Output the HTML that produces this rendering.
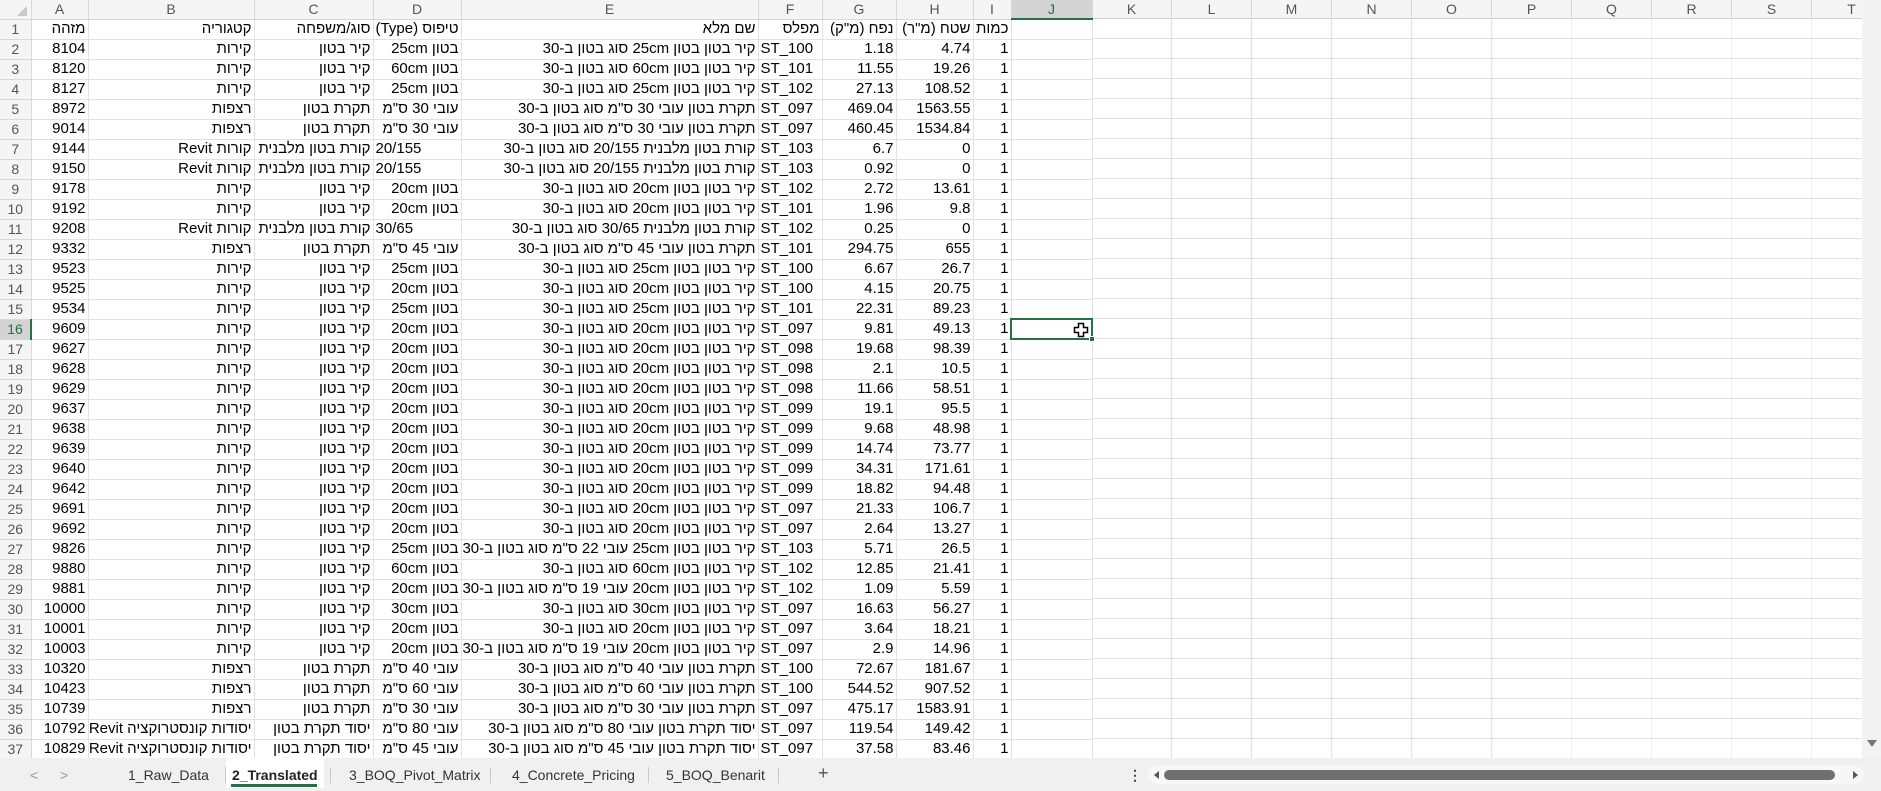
<!DOCTYPE html>
<html><head><meta charset="utf-8">
<style>
*{box-sizing:border-box;margin:0;padding:0}
body{width:1881px;height:791px;overflow:hidden;background:#fff;font-family:"Liberation Sans Narrow","Liberation Sans",sans-serif;font-size:15px;color:#000;position:relative}
#grid{position:absolute;left:0;top:0;width:1862px;height:758px;overflow:hidden;
background-image:repeating-linear-gradient(to right,transparent 0,transparent 79px,#e1e1e1 79px,#e1e1e1 80px);
background-position:1092px 0;}
#hlines{position:absolute;left:1092px;top:19px;width:770px;height:740px;background-image:repeating-linear-gradient(to bottom,transparent 0,transparent 19px,#e1e1e1 19px,#e1e1e1 20px)}
#hdrbar{position:absolute;left:0;top:0;width:1862px;height:19px;background:#f5f5f5;border-bottom:1px solid #d0d0d0}
table{position:absolute;left:0;top:0;border-collapse:collapse;table-layout:fixed;width:1092px;background:#fff}
td{height:20px;border:1px solid #e1e1e1;white-space:nowrap;overflow:hidden;padding:0 2px;text-align:right;line-height:18px}
tr.h td{height:19px;background:#f5f5f5;color:#555;text-align:center;font-family:"Liberation Sans",sans-serif;font-size:14px;border-color:#d8d8d8;border-top:none}
td:first-child{background:#f5f5f5;color:#555;text-align:center;font-family:"Liberation Sans",sans-serif;font-size:14px;border-color:#d8d8d8;border-left:none}
td.l{text-align:left}
.rtl{direction:rtl;text-align:right}
.hl{background:#d3d3d3!important;color:#217346!important;border-bottom:2px solid #217346!important}
.hr{background:#d3d3d3!important;color:#217346!important;border-right:2px solid #217346!important}
.colh{position:absolute;top:0;height:19px;width:80px;text-align:center;color:#555;font-family:"Liberation Sans",sans-serif;font-size:14px;line-height:19px;border-right:1px solid #d8d8d8}
#sel{position:absolute;left:1010px;top:318px;width:83px;height:22px;border:2px solid #217346}
#sel i{position:absolute;right:-4px;bottom:-4px;width:6px;height:6px;background:#217346;border:1px solid #fff}
#vs{position:absolute;left:1862px;top:0;width:19px;height:758px;background:#f3f3f3}
#tabs{position:absolute;left:0;top:758px;width:1881px;height:33px;background:#f0f0f0;font-family:"Liberation Sans Narrow","Liberation Sans",sans-serif;font-size:14px;color:#333}
.t{position:absolute;top:7px;line-height:20px}
.sep{position:absolute;top:9px;width:1px;height:16px;background:#c8c8c8}
</style></head><body>
<div id="grid"><div id="hlines"></div><div id="hdrbar"></div>
<div class="colh" style="left:1092px">K</div><div class="colh" style="left:1172px">L</div><div class="colh" style="left:1252px">M</div><div class="colh" style="left:1332px">N</div><div class="colh" style="left:1412px">O</div><div class="colh" style="left:1492px">P</div><div class="colh" style="left:1572px">Q</div><div class="colh" style="left:1652px">R</div><div class="colh" style="left:1732px">S</div><div class="colh" style="left:1812px">T</div>
<table>
<colgroup><col style="width:31px"><col style="width:57px"><col style="width:166px"><col style="width:119px"><col style="width:88px"><col style="width:297px"><col style="width:64px"><col style="width:74px"><col style="width:77px"><col style="width:38px"><col style="width:81px"></colgroup>
<tr class="h"><td style="background:#f5f5f5;position:relative"><span style="position:absolute;right:4px;bottom:3px;width:0;height:0;border-left:10px solid transparent;border-bottom:10px solid #c8c8c8"></span></td><td>A</td><td>B</td><td>C</td><td>D</td><td>E</td><td>F</td><td>G</td><td>H</td><td>I</td><td class="hl">J</td></tr>
<tr><td>1</td><td class="rtl">מזהה</td><td class="rtl">קטגוריה</td><td class="rtl">סוג/משפחה</td><td class="rtl">טיפוס (Type)</td><td class="rtl">שם מלא</td><td class="rtl">מפלס</td><td class="rtl">נפח (מ"ק)</td><td class="rtl">שטח (מ"ר)</td><td class="rtl">כמות</td><td></td></tr>
<tr><td>2</td><td>8104</td><td class="rtl">קירות</td><td class="rtl">קיר בטון</td><td class="rtl">בטון 25cm</td><td class="rtl">קיר בטון בטון 25cm סוג בטון ב-30</td><td class="l">ST_100</td><td>1.18</td><td>4.74</td><td>1</td><td></td></tr>
<tr><td>3</td><td>8120</td><td class="rtl">קירות</td><td class="rtl">קיר בטון</td><td class="rtl">בטון 60cm</td><td class="rtl">קיר בטון בטון 60cm סוג בטון ב-30</td><td class="l">ST_101</td><td>11.55</td><td>19.26</td><td>1</td><td></td></tr>
<tr><td>4</td><td>8127</td><td class="rtl">קירות</td><td class="rtl">קיר בטון</td><td class="rtl">בטון 25cm</td><td class="rtl">קיר בטון בטון 25cm סוג בטון ב-30</td><td class="l">ST_102</td><td>27.13</td><td>108.52</td><td>1</td><td></td></tr>
<tr><td>5</td><td>8972</td><td class="rtl">רצפות</td><td class="rtl">תקרת בטון</td><td class="rtl">עובי 30 ס"מ</td><td class="rtl">תקרת בטון עובי 30 ס"מ סוג בטון ב-30</td><td class="l">ST_097</td><td>469.04</td><td>1563.55</td><td>1</td><td></td></tr>
<tr><td>6</td><td>9014</td><td class="rtl">רצפות</td><td class="rtl">תקרת בטון</td><td class="rtl">עובי 30 ס"מ</td><td class="rtl">תקרת בטון עובי 30 ס"מ סוג בטון ב-30</td><td class="l">ST_097</td><td>460.45</td><td>1534.84</td><td>1</td><td></td></tr>
<tr><td>7</td><td>9144</td><td class="rtl">קורות Revit</td><td class="rtl">קורת בטון מלבנית</td><td class="l">20/155</td><td class="rtl">קורת בטון מלבנית 20/155 סוג בטון ב-30</td><td class="l">ST_103</td><td>6.7</td><td>0</td><td>1</td><td></td></tr>
<tr><td>8</td><td>9150</td><td class="rtl">קורות Revit</td><td class="rtl">קורת בטון מלבנית</td><td class="l">20/155</td><td class="rtl">קורת בטון מלבנית 20/155 סוג בטון ב-30</td><td class="l">ST_103</td><td>0.92</td><td>0</td><td>1</td><td></td></tr>
<tr><td>9</td><td>9178</td><td class="rtl">קירות</td><td class="rtl">קיר בטון</td><td class="rtl">בטון 20cm</td><td class="rtl">קיר בטון בטון 20cm סוג בטון ב-30</td><td class="l">ST_102</td><td>2.72</td><td>13.61</td><td>1</td><td></td></tr>
<tr><td>10</td><td>9192</td><td class="rtl">קירות</td><td class="rtl">קיר בטון</td><td class="rtl">בטון 20cm</td><td class="rtl">קיר בטון בטון 20cm סוג בטון ב-30</td><td class="l">ST_101</td><td>1.96</td><td>9.8</td><td>1</td><td></td></tr>
<tr><td>11</td><td>9208</td><td class="rtl">קורות Revit</td><td class="rtl">קורת בטון מלבנית</td><td class="l">30/65</td><td class="rtl">קורת בטון מלבנית 30/65 סוג בטון ב-30</td><td class="l">ST_102</td><td>0.25</td><td>0</td><td>1</td><td></td></tr>
<tr><td>12</td><td>9332</td><td class="rtl">רצפות</td><td class="rtl">תקרת בטון</td><td class="rtl">עובי 45 ס"מ</td><td class="rtl">תקרת בטון עובי 45 ס"מ סוג בטון ב-30</td><td class="l">ST_101</td><td>294.75</td><td>655</td><td>1</td><td></td></tr>
<tr><td>13</td><td>9523</td><td class="rtl">קירות</td><td class="rtl">קיר בטון</td><td class="rtl">בטון 25cm</td><td class="rtl">קיר בטון בטון 25cm סוג בטון ב-30</td><td class="l">ST_100</td><td>6.67</td><td>26.7</td><td>1</td><td></td></tr>
<tr><td>14</td><td>9525</td><td class="rtl">קירות</td><td class="rtl">קיר בטון</td><td class="rtl">בטון 20cm</td><td class="rtl">קיר בטון בטון 20cm סוג בטון ב-30</td><td class="l">ST_100</td><td>4.15</td><td>20.75</td><td>1</td><td></td></tr>
<tr><td>15</td><td>9534</td><td class="rtl">קירות</td><td class="rtl">קיר בטון</td><td class="rtl">בטון 25cm</td><td class="rtl">קיר בטון בטון 25cm סוג בטון ב-30</td><td class="l">ST_101</td><td>22.31</td><td>89.23</td><td>1</td><td></td></tr>
<tr><td class="hr">16</td><td>9609</td><td class="rtl">קירות</td><td class="rtl">קיר בטון</td><td class="rtl">בטון 20cm</td><td class="rtl">קיר בטון בטון 20cm סוג בטון ב-30</td><td class="l">ST_097</td><td>9.81</td><td>49.13</td><td>1</td><td></td></tr>
<tr><td>17</td><td>9627</td><td class="rtl">קירות</td><td class="rtl">קיר בטון</td><td class="rtl">בטון 20cm</td><td class="rtl">קיר בטון בטון 20cm סוג בטון ב-30</td><td class="l">ST_098</td><td>19.68</td><td>98.39</td><td>1</td><td></td></tr>
<tr><td>18</td><td>9628</td><td class="rtl">קירות</td><td class="rtl">קיר בטון</td><td class="rtl">בטון 20cm</td><td class="rtl">קיר בטון בטון 20cm סוג בטון ב-30</td><td class="l">ST_098</td><td>2.1</td><td>10.5</td><td>1</td><td></td></tr>
<tr><td>19</td><td>9629</td><td class="rtl">קירות</td><td class="rtl">קיר בטון</td><td class="rtl">בטון 20cm</td><td class="rtl">קיר בטון בטון 20cm סוג בטון ב-30</td><td class="l">ST_098</td><td>11.66</td><td>58.51</td><td>1</td><td></td></tr>
<tr><td>20</td><td>9637</td><td class="rtl">קירות</td><td class="rtl">קיר בטון</td><td class="rtl">בטון 20cm</td><td class="rtl">קיר בטון בטון 20cm סוג בטון ב-30</td><td class="l">ST_099</td><td>19.1</td><td>95.5</td><td>1</td><td></td></tr>
<tr><td>21</td><td>9638</td><td class="rtl">קירות</td><td class="rtl">קיר בטון</td><td class="rtl">בטון 20cm</td><td class="rtl">קיר בטון בטון 20cm סוג בטון ב-30</td><td class="l">ST_099</td><td>9.68</td><td>48.98</td><td>1</td><td></td></tr>
<tr><td>22</td><td>9639</td><td class="rtl">קירות</td><td class="rtl">קיר בטון</td><td class="rtl">בטון 20cm</td><td class="rtl">קיר בטון בטון 20cm סוג בטון ב-30</td><td class="l">ST_099</td><td>14.74</td><td>73.77</td><td>1</td><td></td></tr>
<tr><td>23</td><td>9640</td><td class="rtl">קירות</td><td class="rtl">קיר בטון</td><td class="rtl">בטון 20cm</td><td class="rtl">קיר בטון בטון 20cm סוג בטון ב-30</td><td class="l">ST_099</td><td>34.31</td><td>171.61</td><td>1</td><td></td></tr>
<tr><td>24</td><td>9642</td><td class="rtl">קירות</td><td class="rtl">קיר בטון</td><td class="rtl">בטון 20cm</td><td class="rtl">קיר בטון בטון 20cm סוג בטון ב-30</td><td class="l">ST_099</td><td>18.82</td><td>94.48</td><td>1</td><td></td></tr>
<tr><td>25</td><td>9691</td><td class="rtl">קירות</td><td class="rtl">קיר בטון</td><td class="rtl">בטון 20cm</td><td class="rtl">קיר בטון בטון 20cm סוג בטון ב-30</td><td class="l">ST_097</td><td>21.33</td><td>106.7</td><td>1</td><td></td></tr>
<tr><td>26</td><td>9692</td><td class="rtl">קירות</td><td class="rtl">קיר בטון</td><td class="rtl">בטון 20cm</td><td class="rtl">קיר בטון בטון 20cm סוג בטון ב-30</td><td class="l">ST_097</td><td>2.64</td><td>13.27</td><td>1</td><td></td></tr>
<tr><td>27</td><td>9826</td><td class="rtl">קירות</td><td class="rtl">קיר בטון</td><td class="rtl">בטון 25cm</td><td class="rtl">קיר בטון בטון 25cm עובי 22 ס"מ סוג בטון ב-30</td><td class="l">ST_103</td><td>5.71</td><td>26.5</td><td>1</td><td></td></tr>
<tr><td>28</td><td>9880</td><td class="rtl">קירות</td><td class="rtl">קיר בטון</td><td class="rtl">בטון 60cm</td><td class="rtl">קיר בטון בטון 60cm סוג בטון ב-30</td><td class="l">ST_102</td><td>12.85</td><td>21.41</td><td>1</td><td></td></tr>
<tr><td>29</td><td>9881</td><td class="rtl">קירות</td><td class="rtl">קיר בטון</td><td class="rtl">בטון 20cm</td><td class="rtl">קיר בטון בטון 20cm עובי 19 ס"מ סוג בטון ב-30</td><td class="l">ST_102</td><td>1.09</td><td>5.59</td><td>1</td><td></td></tr>
<tr><td>30</td><td>10000</td><td class="rtl">קירות</td><td class="rtl">קיר בטון</td><td class="rtl">בטון 30cm</td><td class="rtl">קיר בטון בטון 30cm סוג בטון ב-30</td><td class="l">ST_097</td><td>16.63</td><td>56.27</td><td>1</td><td></td></tr>
<tr><td>31</td><td>10001</td><td class="rtl">קירות</td><td class="rtl">קיר בטון</td><td class="rtl">בטון 20cm</td><td class="rtl">קיר בטון בטון 20cm סוג בטון ב-30</td><td class="l">ST_097</td><td>3.64</td><td>18.21</td><td>1</td><td></td></tr>
<tr><td>32</td><td>10003</td><td class="rtl">קירות</td><td class="rtl">קיר בטון</td><td class="rtl">בטון 20cm</td><td class="rtl">קיר בטון בטון 20cm עובי 19 ס"מ סוג בטון ב-30</td><td class="l">ST_097</td><td>2.9</td><td>14.96</td><td>1</td><td></td></tr>
<tr><td>33</td><td>10320</td><td class="rtl">רצפות</td><td class="rtl">תקרת בטון</td><td class="rtl">עובי 40 ס"מ</td><td class="rtl">תקרת בטון עובי 40 ס"מ סוג בטון ב-30</td><td class="l">ST_100</td><td>72.67</td><td>181.67</td><td>1</td><td></td></tr>
<tr><td>34</td><td>10423</td><td class="rtl">רצפות</td><td class="rtl">תקרת בטון</td><td class="rtl">עובי 60 ס"מ</td><td class="rtl">תקרת בטון עובי 60 ס"מ סוג בטון ב-30</td><td class="l">ST_100</td><td>544.52</td><td>907.52</td><td>1</td><td></td></tr>
<tr><td>35</td><td>10739</td><td class="rtl">רצפות</td><td class="rtl">תקרת בטון</td><td class="rtl">עובי 30 ס"מ</td><td class="rtl">תקרת בטון עובי 30 ס"מ סוג בטון ב-30</td><td class="l">ST_097</td><td>475.17</td><td>1583.91</td><td>1</td><td></td></tr>
<tr><td>36</td><td>10792</td><td class="rtl">יסודות קונסטרוקציה Revit</td><td class="rtl">יסוד תקרת בטון</td><td class="rtl">עובי 80 ס"מ</td><td class="rtl">יסוד תקרת בטון עובי 80 ס"מ סוג בטון ב-30</td><td class="l">ST_097</td><td>119.54</td><td>149.42</td><td>1</td><td></td></tr>
<tr><td>37</td><td>10829</td><td class="rtl">יסודות קונסטרוקציה Revit</td><td class="rtl">יסוד תקרת בטון</td><td class="rtl">עובי 45 ס"מ</td><td class="rtl">יסוד תקרת בטון עובי 45 ס"מ סוג בטון ב-30</td><td class="l">ST_097</td><td>37.58</td><td>83.46</td><td>1</td><td></td></tr>
</table>
<div id="sel"><i></i></div>
<svg style="position:absolute;left:1073px;top:322px" width="16" height="16" viewBox="0 0 16 16"><path d="M5.5 1.5h5v4h4v5h-4v4h-5v-4h-4v-5h4z" fill="#fff" stroke="#000" stroke-width="1.5"/></svg>
</div>
<div id="vs"><div style="position:absolute;left:5px;top:740px;width:0;height:0;border-left:5px solid transparent;border-right:5px solid transparent;border-top:7px solid #777"></div></div>
<div id="tabs">
<div class="t" style="left:30px;color:#999">&lt;</div><div class="t" style="left:60px;color:#999">&gt;</div>
<div class="t" style="left:128px">1_Raw_Data</div>
<div class="sep" style="left:225px"></div>
<div style="position:absolute;left:226px;top:0;width:98px;height:30px;background:#fff"></div>
<div class="t" style="left:232px;font-weight:bold;color:#222">2_Translated</div>
<div style="position:absolute;left:231px;top:26px;width:86px;height:3px;background:#217346"></div>
<div class="sep" style="left:330px"></div>
<div class="t" style="left:349px">3_BOQ_Pivot_Matrix</div>
<div class="sep" style="left:490px"></div>
<div class="t" style="left:512px">4_Concrete_Pricing</div>
<div class="sep" style="left:648px"></div>
<div class="t" style="left:666px">5_BOQ_Benarit</div>
<div class="sep" style="left:778px"></div>
<div class="t" style="left:818px;font-size:18px;top:5px;color:#555">+</div>
<div class="t" style="left:1128px;font-weight:bold;color:#444">⋮</div>
<div style="position:absolute;left:1148px;top:8px;width:716px;height:18px;background:#f7f7f7;border-radius:8px"></div>
<div style="position:absolute;left:1154px;top:13px;border-top:4px solid transparent;border-bottom:4px solid transparent;border-right:5px solid #555"></div>
<div style="position:absolute;left:1164px;top:12px;width:671px;height:10px;background:#6f6f6f;border-radius:5px"></div>
<div style="position:absolute;left:1853px;top:13px;border-top:4px solid transparent;border-bottom:4px solid transparent;border-left:5px solid #555"></div>
</div>
</body></html>
